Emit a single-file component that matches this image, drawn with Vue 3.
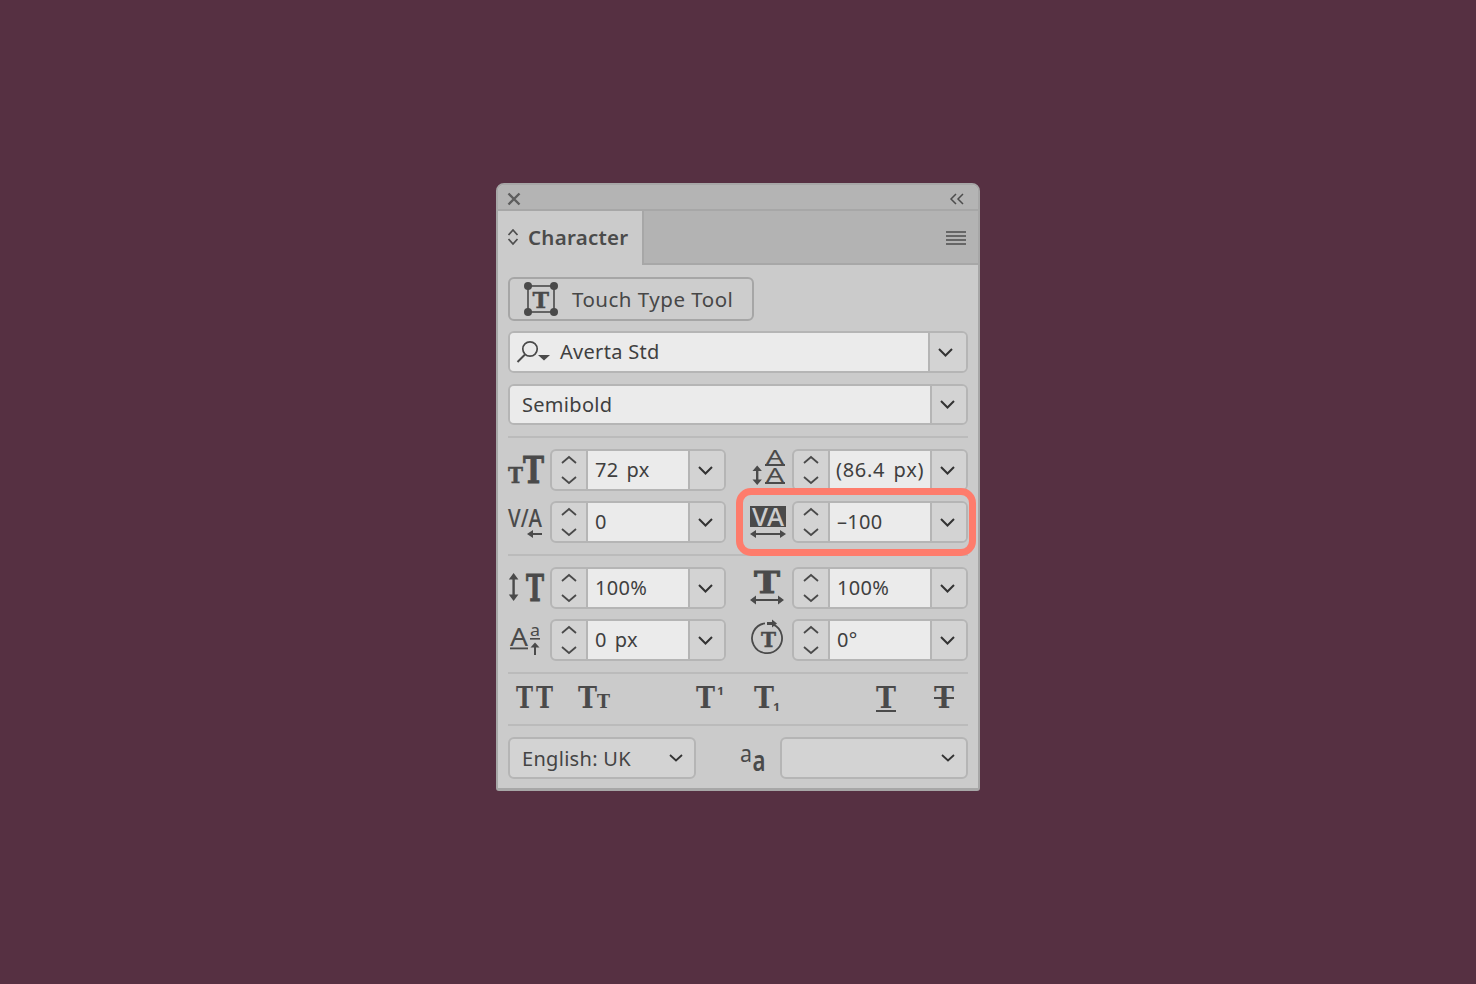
<script setup>
const rows = [
  [
    { icon: 'size', value: '72 px' },
    { icon: 'leading', value: '(86.4 px)', tight: true }
  ],
  [
    { icon: 'kerning', value: '0' },
    { icon: 'tracking', value: '\u2013100', marked: true }
  ]
]
const rows2 = [
  [
    { icon: 'vscale', value: '100%' },
    { icon: 'hscale', value: '100%' }
  ],
  [
    { icon: 'baseline', value: '0 px' },
    { icon: 'rotate', value: '0\u00b0' }
  ]
]
const ink = '#4a4a4a'
</script>

<template>
  <div class="page">
    <div class="panel">
      <div class="titlebar">
        <svg width="14" height="14" viewBox="0 0 14 14"><path d="M1.5 1.5l11 11M12.5 1.5l-11 11" fill="none" stroke="#5e5e5e" stroke-width="2.4" /></svg>
        <svg width="16" height="12" viewBox="0 0 16 12"><path d="M7 1L2 6l5 5M14 1L9 6l5 5" fill="none" stroke="#4d4d4d" stroke-width="1.5" /></svg>
      </div>

      <div class="tabrow">
        <div class="tab">
          <svg width="12" height="18" viewBox="0 0 12 18"><path d="M1.5 7L6 2l4.5 5M1.5 11L6 16l4.5-5" fill="none" stroke="#4f4f4f" stroke-width="1.8" /></svg>
          <span class="tab-label">Character</span>
        </div>
        <div class="tab-rest">
          <svg width="20" height="14" viewBox="0 0 20 14"><path d="M0 1h20M0 5h20M0 9h20M0 13h20" stroke="#666" stroke-width="1.8" /></svg>
        </div>
      </div>

      <div class="body">
        <button class="touch-btn">
          <svg width="34" height="34" viewBox="0 0 34 34">
            <rect x="4" y="4" width="26" height="26" fill="none" stroke="#4a4a4a" stroke-width="1.6" />
            <circle cx="4" cy="4" r="4" fill="#4a4a4a" /><circle cx="30" cy="4" r="4" fill="#4a4a4a" />
            <circle cx="4" cy="30" r="4" fill="#4a4a4a" /><circle cx="30" cy="30" r="4" fill="#4a4a4a" />
            <text x="8.5" y="25.5" class="slab heavy" font-size="22" textLength="17" lengthAdjust="spacingAndGlyphs" :fill="ink" :stroke="ink">T</text>
          </svg>
          <span>Touch Type Tool</span>
        </button>

        <div class="wide-field">
          <div class="wide-input first">
            <svg width="36" height="26" viewBox="0 0 36 26">
              <circle cx="14" cy="11" r="7.2" fill="none" stroke="#4a4a4a" stroke-width="1.7" />
              <path d="M9 16.5L1.5 24" stroke="#4a4a4a" stroke-width="2" fill="none" />
              <path d="M22 17h12l-6 5.5z" fill="#4a4a4a" />
            </svg>
            <span>Averta Std</span>
          </div>
          <div class="drop long">
            <svg width="15" height="9" viewBox="0 0 15 9"><path d="M1 1l6.5 6.5L14 1" fill="none" stroke="#333" stroke-width="2" /></svg>
          </div>
        </div>

        <div class="wide-field second">
          <div class="wide-input"><span>Semibold</span></div>
          <div class="drop">
            <svg width="15" height="9" viewBox="0 0 15 9"><path d="M1 1l6.5 6.5L14 1" fill="none" stroke="#333" stroke-width="2" /></svg>
          </div>
        </div>

        <div class="rule"></div>

        <div class="metric-grid">
          <template v-for="(row, ri) in rows" :key="'a' + ri">
            <div v-for="cell in row" :key="cell.icon" class="metric">
              <div v-if="cell.marked" class="marker"></div>
              <svg class="metric-icon" width="42" height="42" viewBox="0 0 42 42">
                <g v-if="cell.icon === 'size'" :fill="ink" :stroke="ink">
                  <text x="0" y="34" class="slab heavy" font-size="23" textLength="15" lengthAdjust="spacingAndGlyphs">T</text>
                  <text x="15" y="34" class="slab heavier" font-size="38" textLength="21" lengthAdjust="spacingAndGlyphs">T</text>
                </g>
                <g v-else-if="cell.icon === 'leading'" :fill="ink">
                  <text x="16" y="15" class="sans" font-size="19" textLength="18" lengthAdjust="spacingAndGlyphs">A</text>
                  <rect x="15" y="15" width="20" height="2" />
                  <text x="16" y="33" class="sans" font-size="19" textLength="18" lengthAdjust="spacingAndGlyphs">A</text>
                  <rect x="15" y="33" width="20" height="2" />
                  <rect x="6" y="19" width="2.4" height="14" />
                  <path d="M2.5 22l4.7-5.5 4.7 5.5zM2.5 30.5l4.7 5.5 4.7-5.5z" />
                </g>
                <g v-else-if="cell.icon === 'kerning'" :fill="ink">
                  <text x="0" y="26" class="sans medium" font-size="26" textLength="34" lengthAdjust="spacingAndGlyphs">V/A</text>
                  <rect x="23" y="32" width="11" height="2" />
                  <path d="M19 33l6-4v8z" />
                </g>
                <g v-else-if="cell.icon === 'tracking'" :fill="ink">
                  <rect x="0" y="5" width="36" height="21" />
                  <text x="2" y="24.5" class="sans medium" font-size="25" textLength="32" lengthAdjust="spacingAndGlyphs" fill="#cdcdcd">VA</text>
                  <rect x="4" y="32" width="28" height="2" />
                  <path d="M0 33l6-4v8zM36 33l-6-4v8z" />
                </g>
              </svg>
              <div class="spin-field">
                <div class="stepper">
                  <svg width="16" height="30" viewBox="0 0 16 30"><path d="M1 8l7-6 7 6M1 22l7 6 7-6" fill="none" stroke="#4a4a4a" stroke-width="1.8" /></svg>
                </div>
                <div class="value" :class="{ tight: cell.tight }">{{ cell.value }}</div>
                <div class="drop">
                  <svg width="15" height="9" viewBox="0 0 15 9"><path d="M1 1l6.5 6.5L14 1" fill="none" stroke="#333" stroke-width="2" /></svg>
                </div>
              </div>
            </div>
          </template>
        </div>

        <div class="rule"></div>

        <div class="metric-grid">
          <template v-for="(row, ri) in rows2" :key="'b' + ri">
            <div v-for="cell in row" :key="cell.icon" class="metric">
              <svg class="metric-icon" width="42" height="42" viewBox="0 0 42 42">
                <g v-if="cell.icon === 'vscale'" :fill="ink" :stroke="ink">
                  <rect x="4.4" y="10" width="2.4" height="20" stroke="none" />
                  <path d="M0.8 12.5l4.8-6.5 4.8 6.5zM0.8 27.5l4.8 6.5 4.8-6.5z" stroke="none" />
                  <text x="18" y="34" class="slab heavier" font-size="38" textLength="18" lengthAdjust="spacingAndGlyphs">T</text>
                </g>
                <g v-else-if="cell.icon === 'hscale'" :fill="ink">
                  <text x="4" y="26" class="slab heavier" font-size="30" textLength="26" lengthAdjust="spacingAndGlyphs" :stroke="ink">T</text>
                  <rect x="4" y="32" width="26" height="2" />
                  <path d="M0 33l6-4.5v9zM34 33l-6-4.5v9z" />
                </g>
                <g v-else-if="cell.icon === 'baseline'" :fill="ink">
                  <text x="2" y="27" class="sans" font-size="25" textLength="18" lengthAdjust="spacingAndGlyphs">A</text>
                  <rect x="2" y="28.5" width="18" height="1.8" />
                  <text x="22" y="17" class="sans" font-size="17" textLength="10" lengthAdjust="spacingAndGlyphs">a</text>
                  <rect x="22" y="19" width="10" height="1.6" />
                  <rect x="26" y="27" width="2" height="9" />
                  <path d="M22.5 28.5l4.5-5 4.5 5z" />
                </g>
                <g v-else-if="cell.icon === 'rotate'" :fill="ink">
                  <path d="M23 5.4A15 15 0 1 1 15 4.3" fill="none" stroke="#4a4a4a" stroke-width="1.8" />
                  <path d="M17 3h5V0.5l5 4-5 4V6h-5z" />
                  <text x="11" y="28" class="slab heavy" font-size="20" textLength="15" lengthAdjust="spacingAndGlyphs" :stroke="ink">T</text>
                </g>
              </svg>
              <div class="spin-field">
                <div class="stepper">
                  <svg width="16" height="30" viewBox="0 0 16 30"><path d="M1 8l7-6 7 6M1 22l7 6 7-6" fill="none" stroke="#4a4a4a" stroke-width="1.8" /></svg>
                </div>
                <div class="value">{{ cell.value }}</div>
                <div class="drop">
                  <svg width="15" height="9" viewBox="0 0 15 9"><path d="M1 1l6.5 6.5L14 1" fill="none" stroke="#333" stroke-width="2" /></svg>
                </div>
              </div>
            </div>
          </template>
        </div>

        <div class="rule rule-above-styles"></div>

        <div class="style-row">
          <div class="style-group wide">
            <svg width="36" height="30" viewBox="0 0 36 30" :fill="ink">
              <text x="0" y="24" class="slab" font-size="29" textLength="17" lengthAdjust="spacingAndGlyphs">T</text>
              <text x="20" y="24" class="slab" font-size="29" textLength="17" lengthAdjust="spacingAndGlyphs">T</text>
            </svg>
            <svg width="36" height="30" viewBox="0 0 36 30" :fill="ink">
              <text x="0" y="24" class="slab" font-size="29" textLength="19" lengthAdjust="spacingAndGlyphs">T</text>
              <text x="19" y="24" class="slab" font-size="19" textLength="13" lengthAdjust="spacingAndGlyphs">T</text>
            </svg>
          </div>
          <div class="style-group">
            <svg width="36" height="30" viewBox="0 0 36 30" :fill="ink">
              <text x="0" y="24" class="slab" font-size="29" textLength="19" lengthAdjust="spacingAndGlyphs">T</text>
              <text x="21" y="11" class="sans bold" font-size="11" textLength="7" lengthAdjust="spacingAndGlyphs">1</text>
            </svg>
            <svg width="36" height="30" viewBox="0 0 36 30" :fill="ink">
              <text x="0" y="24" class="slab" font-size="29" textLength="20" lengthAdjust="spacingAndGlyphs">T</text>
              <text x="19" y="27" class="sans bold" font-size="11" textLength="7" lengthAdjust="spacingAndGlyphs">1</text>
            </svg>
          </div>
          <div class="style-group">
            <svg width="36" height="30" viewBox="0 0 36 30" :fill="ink">
              <text x="0" y="24" class="slab" font-size="29" textLength="20" lengthAdjust="spacingAndGlyphs">T</text>
              <rect x="0" y="26" width="20" height="2" />
            </svg>
            <svg width="36" height="30" viewBox="0 0 36 30" :fill="ink">
              <text x="0" y="24" class="slab" font-size="29" textLength="20" lengthAdjust="spacingAndGlyphs">T</text>
              <rect x="0" y="13" width="20" height="2" />
            </svg>
          </div>
        </div>

        <div class="rule rule-below-styles"></div>

        <div class="bottom-row">
          <div class="select">
            <span>English: UK</span>
            <svg width="14" height="8" viewBox="0 0 14 8"><path d="M1 1l6 5.5L13 1" fill="none" stroke="#333" stroke-width="1.8" /></svg>
          </div>
          <svg class="aa-icon" width="26" height="26" viewBox="0 0 26 26">
            <text x="0" y="17" class="sans" font-size="24" textLength="12" lengthAdjust="spacingAndGlyphs" fill="#4a4a4a">a</text>
            <text x="12.5" y="26" class="sans semi" font-size="28" textLength="13" lengthAdjust="spacingAndGlyphs" fill="#4a4a4a">a</text>
          </svg>
          <div class="select right">
            <svg width="14" height="8" viewBox="0 0 14 8"><path d="M1 1l6 5.5L13 1" fill="none" stroke="#333" stroke-width="1.8" /></svg>
          </div>
        </div>
      </div>
    </div>
  </div>
</template>

<style>
html, body { margin: 0; background: #563042; }
</style>

<style scoped>
.page { width: 1476px; height: 984px; padding-top: 183px; box-sizing: border-box; background: #563042; font-family: "Noto Sans", sans-serif; color: #444; }
.panel { width: 484px; height: 608px; margin: 0 auto; box-sizing: border-box; background: #cbcbcb; border: 2px solid #a7a7a7; border-bottom-width: 3px; border-radius: 8px 8px 3px 3px; overflow: hidden; }
svg { overflow: visible; }

.titlebar { height: 26px; box-sizing: border-box; display: flex; align-items: center; justify-content: space-between; padding: 3px 13px 0 9px; background: #b4b4b4; border-bottom: 2px solid #a7a7a7; }
.tabrow { display: flex; height: 54px; }
.tab { width: 146px; display: flex; align-items: center; gap: 9px; padding: 0 0 2px 9px; box-sizing: border-box; border-right: 2px solid #a7a7a7; }
.tab-label { font-size: 20.5px; font-weight: 600; letter-spacing: 0.25px; color: #4b4b4b; }
.tab-rest { flex: 1; display: flex; align-items: center; justify-content: flex-end; padding: 2px 12px 0 0; background: #b3b3b3; border-bottom: 2px solid #a7a7a7; }

.body { padding: 12px 10px 0; }
.touch-btn { width: 246px; height: 44px; box-sizing: border-box; display: flex; align-items: center; gap: 14px; padding: 0 0 0 14px; background: #cdcdcd; border: 2px solid #a6a6a6; border-radius: 6px; font: inherit; font-size: 20.5px; letter-spacing: 0.5px; color: #474747; }
.wide-field { display: flex; height: 42px; margin-top: 10px; box-sizing: border-box; border: 2px solid #b5b5b5; border-radius: 6px; background: #d3d3d3; overflow: hidden; }
.wide-field.second { margin-top: 11px; height: 41px; }
.wide-input { flex: 1; display: flex; align-items: center; gap: 8px; padding: 0 0 2px 12px; background: #ebebeb; font-size: 20px; letter-spacing: 0.3px; color: #3f3f3f; }
.wide-field.second .wide-input { padding-bottom: 0; }
.wide-input.first { padding-left: 6px; }
.drop { width: 36px; flex: none; box-sizing: border-box; display: flex; align-items: center; justify-content: center; padding-right: 3px; background: #d3d3d3; border-left: 2px solid #b5b5b5; }
.drop.long { width: 38px; padding-right: 5px; }

.rule { height: 2px; background: #bbb; margin: 11px 0; }
.rule-above-styles { margin-bottom: 0; }
.rule-below-styles { margin-top: 0; }

.metric-grid { display: grid; grid-template-columns: 218px 218px; column-gap: 24px; row-gap: 10px; }
.metric { position: relative; display: flex; height: 42px; }
.metric-icon { width: 42px; height: 42px; flex: none; }
.marker { position: absolute; top: -13px; left: -14px; right: -8px; bottom: -13px; border: 7px solid #fe7c6c; border-radius: 15px; pointer-events: none; }
.spin-field { width: 176px; height: 42px; box-sizing: border-box; display: flex; border: 2px solid #b5b5b5; border-radius: 6px; overflow: hidden; background: #d3d3d3; }
.stepper { width: 36px; box-sizing: border-box; display: flex; align-items: center; justify-content: center; border-right: 2px solid #b5b5b5; }
.value { width: 100px; box-sizing: border-box; padding-left: 7px; background: #ebebeb; font-size: 20px; line-height: 38px; letter-spacing: 0.3px; word-spacing: 2.5px; color: #3f3f3f; white-space: nowrap; }
.value.tight { padding-left: 6px; letter-spacing: 0.7px; }

.style-row { display: grid; grid-template-columns: 180px 180px 1fr; height: 50px; align-items: center; padding-left: 8px; }
.style-group { display: flex; gap: 22px; }
.style-group.wide { gap: 26px; }

.bottom-row { display: flex; align-items: center; height: 42px; }
.select { width: 188px; height: 42px; box-sizing: border-box; display: flex; align-items: center; justify-content: space-between; padding: 0 11px 0 12px; background: #d3d3d3; border: 2px solid #b5b5b5; border-radius: 6px; font-size: 20px; letter-spacing: 0.3px; color: #444; }
.select.right { justify-content: flex-end; margin-left: 14px; }
.aa-icon { margin-left: 44px; flex: none; width: 26px; }

.slab { font-family: "DejaVu Serif", serif; font-weight: 700; }
.heavy { stroke-width: 0.4px; }
.heavier { stroke-width: 0.9px; }
.sans { font-family: "Noto Sans", sans-serif; font-weight: 400; }
.medium { font-weight: 500; }
.semi { font-weight: 600; }
.bold { font-weight: 700; }
</style>
